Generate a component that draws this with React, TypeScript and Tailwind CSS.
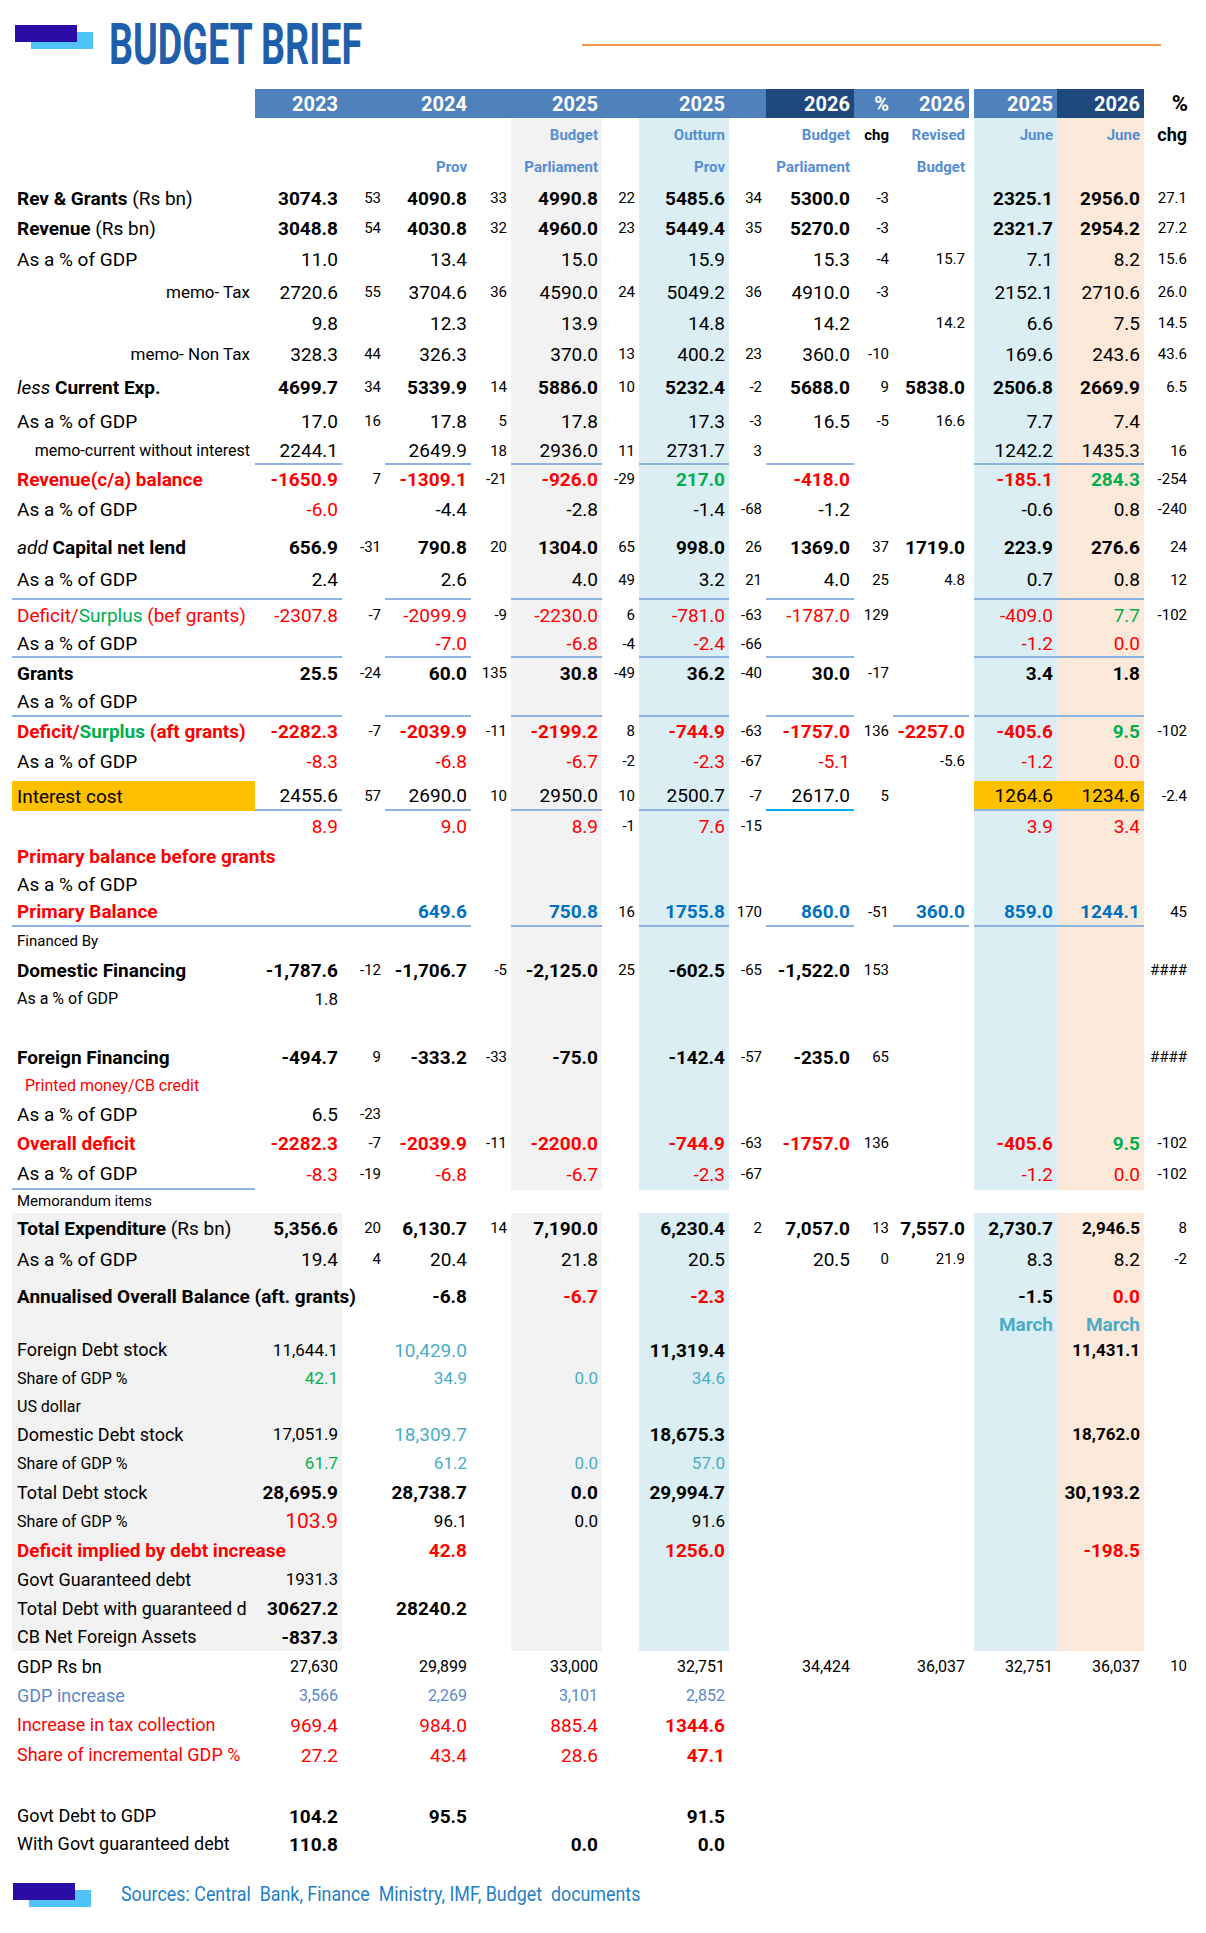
import React from 'react';

const GRID =
  'grid grid-cols-[243px_87px_43px_86px_40px_91px_37px_90px_37px_88px_39px_76px_5px_83px_87px_62px]';

// text styles for number cells
const KIND: Record<string, string> = {
  n: 'text-[19px] text-black',
  c: 'text-[15px] text-black',
  b: 'text-[19px] font-bold text-black',
  r: 'text-[19px] text-[#ff0000]',
  rb: 'text-[19px] font-bold text-[#ff0000]',
  rl: 'text-[21px] text-[#ff0000]',
  g: 'text-[19px] text-[#00b050]',
  gb: 'text-[19px] font-bold text-[#00b050]',
  gm: 'text-[17px] text-[#00b050]',
  blb: 'text-[19px] font-bold text-[#0070c0]',
  lb: 'text-[19px] text-[#4bacc6]',
  lbm: 'text-[17px] text-[#4bacc6]',
  s: 'text-[15px] text-black',
  ss: 'text-[16px] text-black',
  m: 'text-[17px] text-black',
  mb: 'text-[17px] font-bold text-black',
  tb: 'text-[19px] font-bold text-[#4bacc6]',
  gd: 'text-[16px] text-[#5b87c9]',
  sh: 'text-[15px] font-bold text-[#558ed5]',
  shk: 'text-[15px] font-bold text-black',
  shl: 'text-[18px] font-bold text-black',
};

const CHG_COLS = [2, 4, 6, 8, 10, 15];

type Sec = 'top' | 'memo' | 'none';

interface RowDef {
  h: string;
  label?: React.ReactNode;
  lk?: string;
  cells?: string[];
  sec: Sec;
  u?: number[];
  cyan?: number[];
  pad?: string;
  yellow?: boolean;
}

function bgFor(idx: number, sec: Sec, yellow?: boolean) {
  if (yellow && (idx === 0 || idx === 13 || idx === 14)) return 'bg-[#ffc000]';
  if (sec === 'none') return '';
  if (idx === 5) return 'bg-[#f2f2f2]';
  if (idx === 7 || idx === 13) return 'bg-[#daeef3]';
  if (idx === 14) return 'bg-[#fde9d9]';
  if (sec === 'memo' && (idx === 0 || idx === 1)) return 'bg-[#f2f2f2]';
  return '';
}

const R = (t: string) => <span className="text-[#ff0000]">{t}</span>;
const G = (t: string) => <span className="text-[#00b050]">{t}</span>;

const AsPct = 'As a % of GDP';

const rows: RowDef[] = [
  { h: 'h-[34px]', sec: 'top', cells: ['', '', '', '', 'sh|Budget', '', 'sh|Outturn', '', 'sh|Budget', 'shk|chg', 'sh|Revised', 'sh|June', 'sh|June', 'shl|chg'] },
  { h: 'h-[30px]', sec: 'top', cells: ['', '', 'sh|Prov', '', 'sh|Parliament', '', 'sh|Prov', '', 'sh|Parliament', '', 'sh|Budget'] },
  {
    h: 'h-[32px]', sec: 'top',
    label: <><span className="font-bold">Rev &amp; Grants</span> (Rs bn)</>,
    cells: ['b|3074.3', '53', 'b|4090.8', '33', 'b|4990.8', '22', 'b|5485.6', '34', 'b|5300.0', '-3', '', 'b|2325.1', 'b|2956.0', '27.1'],
  },
  {
    h: 'h-[29px]', sec: 'top',
    label: <><span className="font-bold">Revenue</span> (Rs bn)</>,
    cells: ['b|3048.8', '54', 'b|4030.8', '32', 'b|4960.0', '23', 'b|5449.4', '35', 'b|5270.0', '-3', '', 'b|2321.7', 'b|2954.2', '27.2'],
  },
  { h: 'h-[33px]', sec: 'top', label: AsPct, cells: ['11.0', '', '13.4', '', '15.0', '', '15.9', '', '15.3', '-4', 's|15.7', '7.1', '8.2', '15.6'] },
  { h: 'h-[33px]', sec: 'top', label: 'memo- Tax', lk: 'text-[17px] justify-end pr-[5px]', cells: ['2720.6', '55', '3704.6', '36', '4590.0', '24', '5049.2', '36', '4910.0', '-3', '', '2152.1', '2710.6', '26.0'] },
  { h: 'h-[29px]', sec: 'top', cells: ['9.8', '', '12.3', '', '13.9', '', '14.8', '', '14.2', '', 's|14.2', '6.6', '7.5', '14.5'] },
  { h: 'h-[32px]', sec: 'top', label: 'memo- Non Tax', lk: 'text-[17px] justify-end pr-[5px]', cells: ['328.3', '44', '326.3', '', '370.0', '13', '400.2', '23', '360.0', '-10', '', '169.6', '243.6', '43.6'] },
  {
    h: 'h-[35px]', sec: 'top',
    label: <><span className="italic">less</span> <span className="font-bold">Current Exp.</span></>,
    cells: ['b|4699.7', '34', 'b|5339.9', '14', 'b|5886.0', '10', 'b|5232.4', '-2', 'b|5688.0', '9', 'b|5838.0', 'b|2506.8', 'b|2669.9', '6.5'],
  },
  { h: 'h-[32px]', sec: 'top', label: AsPct, cells: ['17.0', '16', '17.8', '5', '17.8', '', '17.3', '-3', '16.5', '-5', 's|16.6', '7.7', '7.4', ''] },
  {
    h: 'h-[28px]', sec: 'top', label: 'memo-current without interest', lk: 'text-[16px] justify-end pr-[5px]',
    cells: ['2244.1', '', '2649.9', '18', '2936.0', '11', '2731.7', '3', '', '', '', '1242.2', '1435.3', '16'],
    u: [1, 3, 5, 7, 9, 13, 14],
  },
  {
    h: 'h-[29px]', sec: 'top', label: 'Revenue(c/a) balance', lk: 'text-[19px] font-bold text-[#ff0000]',
    cells: ['rb|-1650.9', '7', 'rb|-1309.1', '-21', 'rb|-926.0', '-29', 'gb|217.0', '', 'rb|-418.0', '', '', 'rb|-185.1', 'gb|284.3', '-254'],
  },
  { h: 'h-[35px]', sec: 'top', label: AsPct, pad: 'pb-[4px]', cells: ['r|-6.0', '', '-4.4', '', '-2.8', '', '-1.4', '-68', '-1.2', '', '', '-0.6', '0.8', '-240'] },
  {
    h: 'h-[37px]', sec: 'top',
    label: <><span className="italic">add</span> <span className="font-bold">Capital net lend</span></>,
    cells: ['b|656.9', '-31', 'b|790.8', '20', 'b|1304.0', '65', 'b|998.0', '26', 'b|1369.0', '37', 'b|1719.0', 'b|223.9', 'b|276.6', '24'],
  },
  {
    h: 'h-[34px]', sec: 'top', label: AsPct, pad: 'pb-[6px]',
    cells: ['2.4', '', '2.6', '', '4.0', '49', '3.2', '21', '4.0', '25', 's|4.8', '0.7', '0.8', '12'],
    u: [0, 1, 3, 5, 7, 9, 13, 14],
  },
  {
    h: 'h-[30px]', sec: 'top',
    label: <>{R('Deficit/')}{G('Surplus')}{R(' (bef grants)')}</>,
    cells: ['r|-2307.8', '-7', 'r|-2099.9', '-9', 'r|-2230.0', '6', 'r|-781.0', '-63', 'r|-1787.0', '129', '', 'r|-409.0', 'g|7.7', '-102'],
  },
  {
    h: 'h-[28px]', sec: 'top', label: AsPct,
    cells: ['', '', 'r|-7.0', '', 'r|-6.8', '-4', 'r|-2.4', '-66', '', '', '', 'r|-1.2', 'r|0.0', ''],
    u: [0, 1, 3, 5, 7, 9, 13, 14],
  },
  {
    h: 'h-[30px]', sec: 'top', label: 'Grants', lk: 'text-[19px] font-bold',
    cells: ['b|25.5', '-24', 'b|60.0', '135', 'b|30.8', '-49', 'b|36.2', '-40', 'b|30.0', '-17', '', 'b|3.4', 'b|1.8', ''],
  },
  { h: 'h-[29px]', sec: 'top', label: AsPct, cells: [], u: [0, 1, 3, 5, 7, 9, 11, 13, 14] },
  {
    h: 'h-[29px]', sec: 'top',
    label: <span className="font-bold">{R('Deficit/')}{G('Surplus')}{R(' (aft grants)')}</span>,
    cells: ['rb|-2282.3', '-7', 'rb|-2039.9', '-11', 'rb|-2199.2', '8', 'rb|-744.9', '-63', 'rb|-1757.0', '136', 'rb|-2257.0', 'rb|-405.6', 'gb|9.5', '-102'],
  },
  { h: 'h-[35px]', sec: 'top', label: AsPct, pad: 'pb-[5px]', cells: ['r|-8.3', '', 'r|-6.8', '', 'r|-6.7', '-2', 'r|-2.3', '-67', 'r|-5.1', '', 's|-5.6', 'r|-1.2', 'r|0.0', ''] },
  {
    h: 'h-[30px]', sec: 'top', label: 'Interest cost', yellow: true,
    cells: ['2455.6', '57', '2690.0', '10', '2950.0', '10', '2500.7', '-7', '2617.0', '5', '', '1264.6', '1234.6', '-2.4'],
    u: [1, 3, 5, 7, 13, 14], cyan: [9],
  },
  { h: 'h-[31px]', sec: 'top', cells: ['r|8.9', '', 'r|9.0', '', 'r|8.9', '-1', 'r|7.6', '-15', '', '', '', 'r|3.9', 'r|3.4', ''] },
  { h: 'h-[28px]', sec: 'top', label: 'Primary balance before grants', lk: 'text-[19px] font-bold text-[#ff0000]' },
  { h: 'h-[28px]', sec: 'top', label: AsPct },
  {
    h: 'h-[29px]', sec: 'top', label: 'Primary Balance', lk: 'text-[19px] font-bold text-[#ff0000]',
    cells: ['', '', 'blb|649.6', '', 'blb|750.8', '16', 'blb|1755.8', '170', 'blb|860.0', '-51', 'blb|360.0', 'blb|859.0', 'blb|1244.1', '45'],
    u: [0, 1, 2, 3, 5, 7, 9, 11, 13, 14],
  },
  { h: 'h-[29px]', sec: 'top', label: 'Financed By', lk: 'text-[15px]' },
  {
    h: 'h-[28px]', sec: 'top', label: 'Domestic Financing', lk: 'text-[19px] font-bold',
    cells: ['b|-1,787.6', '-12', 'b|-1,706.7', '-5', 'b|-2,125.0', '25', 'b|-602.5', '-65', 'b|-1,522.0', '153', '', '', '', 's|####'],
  },
  { h: 'h-[30px]', sec: 'top', label: AsPct, lk: 'text-[16px]', cells: ['m|1.8'] },
  { h: 'h-[29px]', sec: 'top' },
  {
    h: 'h-[29px]', sec: 'top', label: 'Foreign Financing', lk: 'text-[19px] font-bold',
    cells: ['b|-494.7', '9', 'b|-333.2', '-33', 'b|-75.0', '', 'b|-142.4', '-57', 'b|-235.0', '65', '', '', '', 's|####'],
  },
  { h: 'h-[28px]', sec: 'top', label: 'Printed money/CB credit', lk: 'text-[16px] text-[#ff0000] pl-[13px]' },
  { h: 'h-[29px]', sec: 'top', label: AsPct, cells: ['6.5', '-23'] },
  {
    h: 'h-[29px]', sec: 'top', label: 'Overall deficit', lk: 'text-[19px] font-bold text-[#ff0000]',
    cells: ['rb|-2282.3', '-7', 'rb|-2039.9', '-11', 'rb|-2200.0', '', 'rb|-744.9', '-63', 'rb|-1757.0', '136', '', 'rb|-405.6', 'gb|9.5', '-102'],
  },
  {
    h: 'h-[32px]', sec: 'top', label: AsPct,
    cells: ['r|-8.3', '-19', 'r|-6.8', '', 'r|-6.7', '', 'r|-2.3', '-67', '', '', '', 'r|-1.2', 'r|0.0', '-102'],
    u: [0],
  },
  { h: 'h-[23px]', sec: 'none', label: 'Memorandum items', lk: 'text-[15px]' },
  {
    h: 'h-[30px]', sec: 'memo',
    label: <><span className="font-bold">Total Expenditure</span> (Rs bn)</>,
    cells: ['b|5,356.6', '20', 'b|6,130.7', '14', 'b|7,190.0', '', 'b|6,230.4', '2', 'b|7,057.0', '13', 'b|7,557.0', 'b|2,730.7', 'mb|2,946.5', '8'],
  },
  { h: 'h-[33px]', sec: 'memo', label: AsPct, cells: ['19.4', '4', '20.4', '', '21.8', '', '20.5', '', '20.5', '0', 's|21.9', '8.3', '8.2', '-2'] },
  {
    h: 'h-[37px]', sec: 'memo', label: 'Annualised Overall Balance (aft. grants)', lk: 'text-[19px] font-bold', pad: 'pt-[4px]',
    cells: ['', '', 'b|-6.8', '', 'rb|-6.7', '', 'rb|-2.3', '', '', '', '', 'b|-1.5', 'rb|0.0', ''],
  },
  { h: 'h-[23px]', sec: 'memo', cells: ['', '', '', '', '', '', '', '', '', '', '', 'tb|March', 'tb|March', ''] },
  {
    h: 'h-[28px]', sec: 'memo', label: 'Foreign Debt stock', lk: 'text-[18px]',
    cells: ['m|11,644.1', '', 'lb|10,429.0', '', '', '', 'b|11,319.4', '', '', '', '', '', 'mb|11,431.1', ''],
  },
  { h: 'h-[29px]', sec: 'memo', label: 'Share of GDP %', lk: 'text-[16px]', cells: ['gm|42.1', '', 'lbm|34.9', '', 'lbm|0.0', '', 'lbm|34.6'] },
  { h: 'h-[27px]', sec: 'memo', label: 'US dollar', lk: 'text-[16px]' },
  {
    h: 'h-[29px]', sec: 'memo', label: 'Domestic Debt stock', lk: 'text-[18px]',
    cells: ['m|17,051.9', '', 'lb|18,309.7', '', '', '', 'b|18,675.3', '', '', '', '', '', 'mb|18,762.0', ''],
  },
  { h: 'h-[29px]', sec: 'memo', label: 'Share of GDP %', lk: 'text-[16px]', cells: ['gm|61.7', '', 'lbm|61.2', '', 'lbm|0.0', '', 'lbm|57.0'] },
  {
    h: 'h-[29px]', sec: 'memo', label: 'Total Debt stock', lk: 'text-[18px]',
    cells: ['b|28,695.9', '', 'b|28,738.7', '', 'b|0.0', '', 'b|29,994.7', '', '', '', '', '', 'b|30,193.2', ''],
  },
  { h: 'h-[29px]', sec: 'memo', label: 'Share of GDP %', lk: 'text-[16px]', cells: ['rl|103.9', '', 'm|96.1', '', 'm|0.0', '', 'm|91.6'] },
  {
    h: 'h-[29px]', sec: 'memo', label: 'Deficit implied by debt increase', lk: 'text-[19px] font-bold text-[#ff0000]',
    cells: ['', '', 'rb|42.8', '', '', '', 'rb|1256.0', '', '', '', '', '', 'rb|-198.5', ''],
  },
  { h: 'h-[29px]', sec: 'memo', label: 'Govt Guaranteed debt', lk: 'text-[18px]', cells: ['m|1931.3'] },
  { h: 'h-[29px]', sec: 'memo', label: 'Total Debt with guaranteed d', lk: 'text-[18px]', cells: ['b|30627.2', '', 'b|28240.2'] },
  { h: 'h-[28px]', sec: 'memo', label: 'CB Net Foreign Assets', lk: 'text-[18px]', cells: ['b|-837.3'] },
  {
    h: 'h-[31px]', sec: 'none', label: 'GDP Rs bn', lk: 'text-[18px]',
    cells: ['ss|27,630', '', 'ss|29,899', '', 'ss|33,000', '', 'ss|32,751', '', 'ss|34,424', '', 'ss|36,037', 'ss|32,751', 'ss|36,037', '10'],
  },
  { h: 'h-[28px]', sec: 'none', label: 'GDP increase', lk: 'text-[18px] text-[#5b87c9]', cells: ['gd|3,566', '', 'gd|2,269', '', 'gd|3,101', '', 'gd|2,852'] },
  { h: 'h-[30px]', sec: 'none', label: 'Increase in tax collection', lk: 'text-[18px] text-[#ff0000]', cells: ['r|969.4', '', 'r|984.0', '', 'r|885.4', '', 'rb|1344.6'] },
  { h: 'h-[30px]', sec: 'none', label: 'Share of incremental GDP %', lk: 'text-[18px] text-[#ff0000]', cells: ['r|27.2', '', 'r|43.4', '', 'r|28.6', '', 'rb|47.1'] },
  { h: 'h-[32px]', sec: 'none' },
  { h: 'h-[28px]', sec: 'none', label: 'Govt Debt to GDP', lk: 'text-[18px]', cells: ['b|104.2', '', 'b|95.5', '', '', '', 'b|91.5'] },
  { h: 'h-[28px]', sec: 'none', label: 'With Govt guaranteed debt', lk: 'text-[18px]', cells: ['b|110.8', '', '', '', 'b|0.0', '', 'b|0.0'] },
];

// 14 data values -> grid columns 1..11, 13..15 (12 is the gap)
const GRID_IDX = [1, 2, 3, 4, 5, 6, 7, 8, 9, 10, 11, 13, 14, 15];

function TableRow({ row }: { row: RowDef }) {
  const vals: Record<number, string> = {};
  (row.cells || []).forEach((c, i) => {
    vals[GRID_IDX[i]] = c;
  });
  const cols = Array.from({ length: 16 }, (_, i) => i);
  return (
    <div className={`${GRID} ${row.h}`}>
      {cols.map((idx) => {
        const bg = bgFor(idx, row.sec, row.yellow);
        const line = row.cyan?.includes(idx)
          ? 'border-b-2 border-[#00b0f0]'
          : row.u?.includes(idx)
          ? 'border-b-2 border-[#8db3e2]'
          : '';
        if (idx === 0) {
          return (
            <div
              key={idx}
              className={`relative z-10 flex items-center whitespace-nowrap leading-none pl-[5px] ${bg} ${line} ${row.pad || ''} ${row.lk || 'text-[19px]'}`}
            >
              <span>{row.label}</span>
            </div>
          );
        }
        const raw = vals[idx] || '';
        let kind = CHG_COLS.includes(idx) ? 'c' : 'n';
        let text = raw;
        if (raw.includes('|')) {
          const p = raw.split('|');
          kind = p[0];
          text = p[1];
        }
        return (
          <div
            key={idx}
            className={`flex items-center justify-end whitespace-nowrap leading-none ${idx === 15 ? 'pr-[19px]' : 'pr-[4px]'} ${bg} ${line} ${row.pad || ''} ${KIND[kind]}`}
          >
            {text}
          </div>
        );
      })}
    </div>
  );
}

function HeaderBar() {
  const mid = 'bg-[#4f81bd]';
  const dark = 'bg-[#1f497d]';
  const cell = 'flex items-center justify-end pr-[4px] text-[20px] font-bold text-white leading-none';
  return (
    <div className={`${GRID} h-[29px]`}>
      <div />
      <div className={`${cell} ${mid}`}>2023</div>
      <div className={mid} />
      <div className={`${cell} ${mid}`}>2024</div>
      <div className={mid} />
      <div className={`${cell} ${mid}`}>2025</div>
      <div className={mid} />
      <div className={`${cell} ${mid}`}>2025</div>
      <div className={mid} />
      <div className={`${cell} ${dark}`}>2026</div>
      <div className={`${cell} ${mid}`}>%</div>
      <div className={`${cell} ${mid}`}>2026</div>
      <div />
      <div className={`${cell} ${mid}`}>2025</div>
      <div className={`${cell} ${dark}`}>2026</div>
      <div className="flex items-center justify-end pr-[18px] text-[22px] font-bold text-black leading-none">%</div>
    </div>
  );
}

function Logo() {
  return (
    <svg width="78" height="24" viewBox="0 0 78 24">
      <rect x="16" y="7" width="62" height="17" fill="#4fc3f7" />
      <rect x="0" y="0" width="62" height="17" fill="#2a0ca6" />
    </svg>
  );
}

export default function App() {
  return (
    <div className="w-[1206px] bg-white font-['Roboto',sans-serif] text-black">
      {/* Title band */}
      <div className="flex h-[89px] items-start">
        <div className="ml-[15px] mt-[25px]">
          <Logo />
        </div>
        <div className="ml-[16px] mt-[17px] w-[260px] origin-left scale-x-[0.66] whitespace-nowrap text-[57px] font-bold leading-[56px] text-[#1e5eaa]">
          BUDGET BRIEF
        </div>
        <div className="ml-auto mr-[45px] mt-[44px] h-[2px] w-[579px] bg-[#f79646]" />
      </div>

      {/* Table */}
      <div className="ml-[12px]">
        <HeaderBar />
        {rows.map((row, i) => (
          <TableRow key={i} row={row} />
        ))}
      </div>

      {/* Footer */}
      <div className="mt-[25px] flex h-[50px] items-start">
        <div className="ml-[13px]">
          <Logo />
        </div>
        <div className="ml-[30px] mt-[-2px] origin-left scale-x-[0.85] whitespace-nowrap text-[21px] leading-[26px] text-[#1f7fc7]">
          Sources: Central&nbsp; Bank, Finance&nbsp; Ministry, IMF, Budget&nbsp; documents
        </div>
      </div>
    </div>
  );
}
